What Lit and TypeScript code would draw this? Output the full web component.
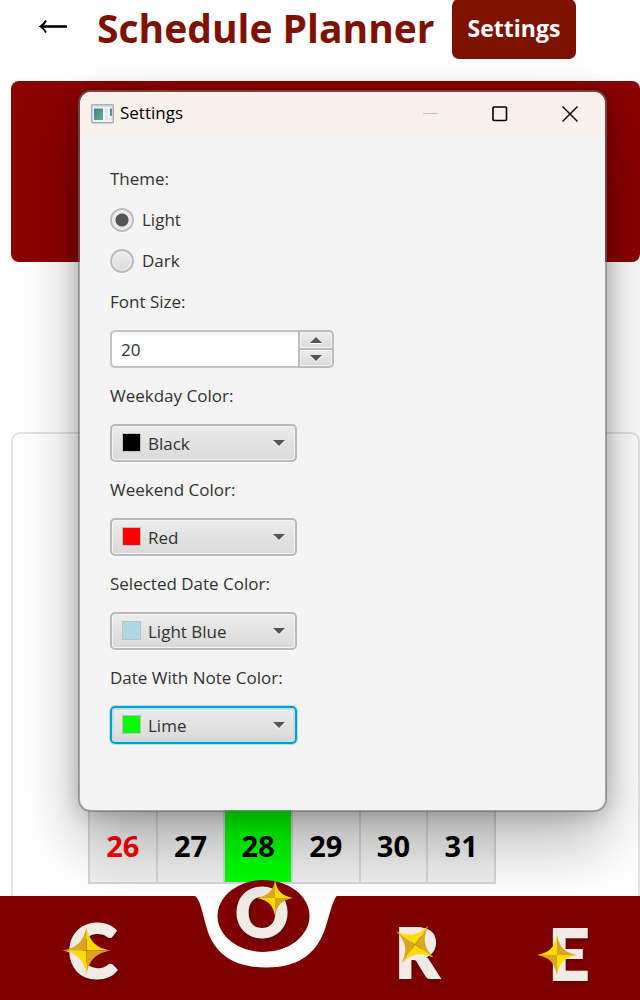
import { LitElement, html, css, svg } from "lit";
import { customElement, property, state } from "lit/decorators.js";

const star = (x: number, y: number, r: number, angle = 0) => {
  const far = r * 0.38;
  const near = r * 0.12;
  const quadrant = `M0 0V${-r}C${near} ${-far} ${far} ${-near} ${r} 0Z`;
  return svg`<g transform="translate(${x} ${y}) rotate(${angle})">
    ${[0, 90, 180, 270].map(
      (a) => svg`<path
        d=${quadrant}
        transform="rotate(${a})"
        fill=${a % 180 === 0 ? "#ffdc00" : "#dba520"}
      ></path>`
    )}
  </g>`;
};

@customElement("color-field")
export class ColorField extends LitElement {
  @property() name = "";
  @property() label = "";
  @property() value = "";
  @property({ type: Boolean, reflect: true }) highlighted = false;

  private colors: Record<string, string> = {
    Black: "#000000",
    Red: "#ff0000",
    "Light Blue": "#add8e6",
    Lime: "#00ff00",
  };

  static styles = css`
    :host {
      display: flex;
      flex-direction: column;
      gap: 15px;
    }
    .label {
      line-height: 26px;
    }
    .box {
      position: relative;
      width: 187px;
      height: 38px;
    }
    .select {
      appearance: none;
      box-sizing: border-box;
      width: 100%;
      height: 100%;
      padding: 0 32px 0 36px;
      border: 2px solid #bababa;
      border-radius: 5px;
      background: linear-gradient(#ececec, #d9d9d9);
      box-shadow: inset 0 0 0 1px #f3f3f3, 0 1px 0 #fcfcfc;
      color: #323232;
      font: inherit;
      outline: none;
    }
    :host([highlighted]) .select {
      border-color: #039ed3;
      box-shadow: inset 0 0 0 2px #c5dfe8, 0 0 0 1px #b4dfee;
    }
    .swatch {
      position: absolute;
      left: 12px;
      top: 9px;
      width: 17px;
      height: 17px;
      border: 1px solid #c0c0c0;
      pointer-events: none;
    }
    .arrow {
      position: absolute;
      right: 12px;
      top: 16px;
      pointer-events: none;
    }
  `;

  render() {
    return html`
      <label class="label" for="field">${this.label}</label>
      <div class="box">
        <select
          class="select"
          id="field"
          name=${this.name}
          @change=${(e: Event) => (this.value = (e.target as HTMLSelectElement).value)}
        >
          ${Object.keys(this.colors).map(
            (c) => html`<option ?selected=${c === this.value}>${c}</option>`
          )}
        </select>
        <span class="swatch" style="background:${this.colors[this.value]}"></span>
        <svg class="arrow" width="12" height="7" viewBox="0 0 12 7">
          <path d="M0 1h12L6 7z" fill="#fff"></path>
          <path d="M0 0h12L6 6z" fill="#555"></path>
        </svg>
      </div>
    `;
  }
}

@customElement("settings-window")
export class SettingsWindow extends LitElement {
  @state() private theme = "Light";
  @state() private size = 20;

  static styles = css`
    :host {
      display: block;
      border: 2px solid rgba(110, 110, 110, 0.6);
      border-radius: 13px;
      background: #f4f4f4;
      background-clip: padding-box;
      box-shadow: 0 32px 64px rgba(0, 0, 0, 0.28), 0 2px 21px rgba(0, 0, 0, 0.22);
      overflow: hidden;
      color: #323232;
      font-size: 17px;
    }
    .titlebar {
      display: flex;
      align-items: center;
      height: 43px;
      padding-left: 11px;
      background: linear-gradient(90deg, #f8f1ea, #f9efed 40%, #f9f0ed);
      color: #000;
    }
    .name {
      flex: 1;
      padding-left: 6px;
      font-size: 17px;
      font-weight: 400;
      line-height: 26px;
      margin: 0 0 2px;
    }
    .control {
      display: grid;
      place-items: center;
      width: 70px;
      height: 42px;
      padding: 0;
      border: 0;
      background: none;
    }
    .form {
      display: flex;
      flex-direction: column;
      gap: 15px;
      padding: 31px 30px 66px;
    }
    .themes {
      display: flex;
      flex-direction: column;
      gap: 15px;
      margin: 0;
      padding: 0;
      border: 0;
    }
    .legend {
      padding: 0;
      margin-bottom: 15px;
      line-height: 26px;
    }
    .label {
      line-height: 26px;
    }
    .choice {
      display: flex;
      align-items: center;
      gap: 8px;
      line-height: 26px;
    }
    .radio {
      appearance: none;
      box-sizing: border-box;
      width: 24px;
      height: 24px;
      margin: 0;
      border: 2px solid #bcbcbc;
      border-radius: 50%;
      background: linear-gradient(#eeeeee, #dcdcdc);
      box-shadow: inset 0 0 0 1px #f3f3f3, 0 1px 0 #fcfcfc;
    }
    .radio:checked {
      background: radial-gradient(circle, #555 6px, transparent 7px) border-box,
        linear-gradient(#eeeeee, #e4e4e4);
    }
    .spinner {
      display: grid;
      grid-template-columns: 188px 36px;
      height: 38px;
    }
    .number {
      box-sizing: border-box;
      min-width: 0;
      padding: 0 9px;
      border: 2px solid #c4c4c4;
      border-right: 0;
      border-radius: 5px 0 0 5px;
      background: linear-gradient(#f1f1f1, #fff 5px);
      color: #323232;
      font: inherit;
      outline: none;
    }
    .steps {
      display: grid;
      grid-template-rows: 1fr 1fr;
    }
    .step {
      display: grid;
      place-items: center;
      padding: 0;
      border: 2px solid #bcbcbc;
      background: linear-gradient(#ededed, #dadada);
      box-shadow: inset 0 0 0 1px #f3f3f3;
    }
    .step:first-child {
      border-bottom-width: 1px;
      border-top-right-radius: 5px;
    }
    .step:last-child {
      border-top-width: 1px;
      border-bottom-right-radius: 5px;
    }
  `;

  private choice(name: string) {
    return html`<label class="choice">
      <input
        class="radio"
        type="radio"
        name="theme"
        .checked=${this.theme === name}
        @change=${() => (this.theme = name)}
      />${name}
    </label>`;
  }

  render() {
    return html`
      <header class="titlebar">
        <svg width="23" height="20" viewBox="0 0 23 20">
          <defs>
            <linearGradient id="pane" x1="0" y1="0" x2="1" y2="1">
              <stop offset="0" stop-color="#4978a6"></stop>
              <stop offset="1" stop-color="#60b878"></stop>
            </linearGradient>
          </defs>
          <rect x=".75" y=".75" width="21.5" height="18" rx="1" fill="#f1f3f5" stroke="#a6afb9" stroke-width="1.5"></rect>
          <path d="M2 2.5h19" stroke="#d5dbe2"></path>
          <rect x="3" y="4.500" width="9" height="11.500" fill="url(#pane)"></rect>
          <path d="M14 4.500h3v5h-3zM14 11h3v5h-3zM18.500 13h2v3h-2z" fill="#e1e3e5"></path>
          <rect x="19" y="4.500" width="2" height="7.500" fill="url(#pane)"></rect>
        </svg>
        <h2 class="name">Settings</h2>
        <button class="control" aria-label="Minimize" disabled>
          <svg width="15" height="15"><path d="M0 7.500h15" stroke="#c9c2c0"></path></svg>
        </button>
        <button class="control" aria-label="Maximize">
          <svg width="16" height="16">
            <rect x="1" y="1" width="13.500" height="13.500" rx="1" fill="none" stroke="#000" stroke-width="1.600"></rect>
          </svg>
        </button>
        <button class="control" aria-label="Close">
          <svg width="16" height="16">
            <path d="M.5.5l15 15M15.500.5l-15 15" stroke="#000" stroke-width="1.400"></path>
          </svg>
        </button>
      </header>
      <form class="form">
        <fieldset class="themes">
          <legend class="legend">Theme:</legend>
          ${this.choice("Light")} ${this.choice("Dark")}
        </fieldset>
        <label class="label" for="size">Font Size:</label>
        <div class="spinner">
          <input class="number" id="size" inputmode="numeric" .value=${String(this.size)} />
          <div class="steps">
            <button class="step" type="button" aria-label="Increase" @click=${() => this.size++}>
              <svg width="12" height="7"><path d="M0 7h12L6 1z" fill="#fff"></path><path d="M0 6h12L6 0z" fill="#555"></path></svg>
            </button>
            <button class="step" type="button" aria-label="Decrease" @click=${() => this.size--}>
              <svg width="12" height="7"><path d="M0 1h12L6 7z" fill="#fff"></path><path d="M0 0h12L6 6z" fill="#555"></path></svg>
            </button>
          </div>
        </div>
        <color-field name="weekday" label="Weekday Color:" value="Black"></color-field>
        <color-field name="weekend" label="Weekend Color:" value="Red"></color-field>
        <color-field name="selected" label="Selected Date Color:" value="Light Blue"></color-field>
        <color-field name="noted" label="Date With Note Color:" value="Lime" highlighted></color-field>
      </form>
    `;
  }
}

@customElement("core-nav")
export class CoreNav extends LitElement {
  static styles = css`
    :host {
      display: block;
    }
    .bar {
      display: grid;
      grid-template-columns: 186fr 160fr 144fr 150fr;
      justify-items: center;
      height: 104px;
      background: #800000;
    }
    .link {
      display: block;
      padding-top: 16px;
    }
    .raised {
      padding: 0;
      margin-top: -18px;
    }
    .icon {
      display: block;
      overflow: visible;
    }
    .letter {
      font-family: Lato, sans-serif;
      font-weight: 900;
      fill: #f0ebe5;
      stroke: #f0ebe5;
      stroke-width: 2px;
      text-anchor: middle;
      filter: drop-shadow(1px 2px 2px rgba(0, 0, 0, 0.3));
    }
  `;

  render() {
    return html`<nav class="bar">
      <a class="link" href="#c" aria-label="C">
        <svg class="icon" width="60" height="80" viewBox="63 912 60 80">
          <text class="letter" x="92.500" y="977.500" font-size="75">C</text>
          ${star(86.500, 950.500, 24)}
        </svg>
      </a>
      <a class="link raised" href="#o" aria-label="O">
        <svg class="icon" width="144" height="92" viewBox="194 878 144 92">
          <path
            d="M194 895.500H337Q334 899 331 909L325 929C316 955 297 967.500 266 967.500S215 955 207 929L201 907Q198 897 194 895.500Z"
            fill="#fff"
          ></path>
          <ellipse cx="263.500" cy="916" rx="46" ry="36" fill="#800000"></ellipse>
          <text class="letter" x="262" y="937" font-size="66">O</text>
          ${star(275, 898, 18)}
        </svg>
      </a>
      <a class="link" href="#r" aria-label="R">
        <svg class="icon" width="60" height="80" viewBox="388 912 60 80">
          <text class="letter" x="417" y="978" font-size="68">R</text>
          ${star(415, 944.500, 23, 125)}
        </svg>
      </a>
      <a class="link" href="#e" aria-label="E">
        <svg class="icon" width="60" height="80" viewBox="535 912 60 80">
          <text class="letter" x="569" y="980" font-size="71">E</text>
          ${star(557, 955, 20, 90)}
        </svg>
      </a>
    </nav>`;
  }
}

@customElement("app-root")
export class AppRoot extends LitElement {
  private days = [26, 27, 28, 29, 30, 31];

  static styles = css`
    :host {
      position: relative;
      display: flex;
      flex-direction: column;
      height: 100vh;
      overflow: hidden;
      background: #fff;
      font-family: "Open Sans", "Noto Sans", sans-serif;
    }
    .top {
      display: flex;
      align-items: flex-start;
      height: 81px;
      padding-left: 39px;
    }
    .back {
      display: block;
      margin: 17px 29px 0 0;
      padding: 0;
      border: 0;
      background: none;
      line-height: 0;
    }
    .title {
      flex: none;
      margin: 0 17px 0 0;
      color: #7f1100;
      font-size: 39px;
      line-height: 56px;
      font-weight: 700;
    }
    .open {
      height: 60px;
      padding: 0 16px 2px;
      margin-top: -1px;
      border: 0;
      border-radius: 7px;
      background: #7f1100;
      color: #fff;
      font: 700 23px "Open Sans", "Noto Sans", sans-serif;
    }
    .banner {
      flex: none;
      height: 181px;
      margin: 0 0 170px 11px;
      border-radius: 8px;
      background: #8b0000;
    }
    .calendar {
      flex: 1;
      display: flex;
      align-items: flex-end;
      margin-left: 11px;
      padding: 0 75px 12px;
      border: 2px solid #e4e4e4;
      border-bottom: 0;
      border-radius: 9px 9px 0 0;
    }
    .week {
      border-collapse: collapse;
      table-layout: fixed;
      width: 408px;
    }
    .day {
      box-sizing: border-box;
      height: 76px;
      padding: 0;
      border: 2px solid #d6d6d6;
      background: #f0f0f0;
      color: #000;
      font-size: 29px;
      font-weight: 700;
      text-align: center;
    }
    .weekend {
      color: #f00;
    }
    .noted {
      background: #0f0;
    }
    .dialog {
      position: absolute;
      left: 78px;
      right: 33px;
      top: 90px;
    }
  `;

  render() {
    return html`
      <header class="top">
        <button class="back" aria-label="Back">
          <svg width="29" height="20" viewBox="0 0 29 20" fill="none" stroke="#000">
            <path d="M2 9.500H28" stroke-width="2.600"></path>
            <path d="M7 3.500Q5 7.500 1.500 9.500Q5 11.500 7 15.500" stroke-width="2"></path>
          </svg>
        </button>
        <h1 class="title">Schedule Planner</h1>
        <button class="open">Settings</button>
      </header>
      <section class="banner"></section>
      <main class="calendar">
        <table class="week">
          <tbody>
            <tr>
              ${this.days.map(
                (d) => html`<td class="day ${d === 26 ? "weekend" : ""} ${d === 28 ? "noted" : ""}">${d}</td>`
              )}
            </tr>
          </tbody>
        </table>
      </main>
      <core-nav></core-nav>
      <settings-window class="dialog" role="dialog" aria-label="Settings"></settings-window>
    `;
  }
}
